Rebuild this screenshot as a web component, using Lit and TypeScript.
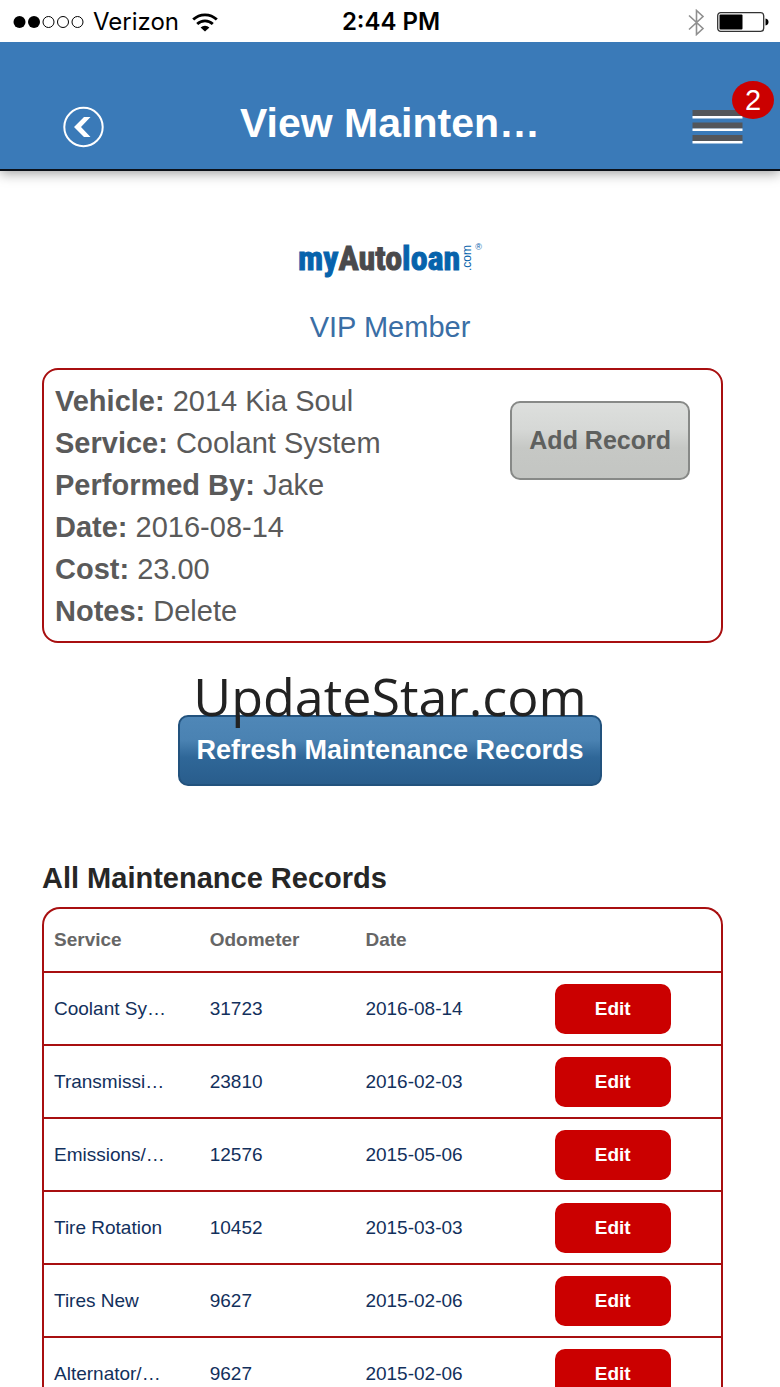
import { LitElement, html, css, svg } from "lit";
import { customElement, property } from "lit/decorators.js";

interface MaintenanceRecord {
  service: string;
  odometer: string;
  date: string;
}

const RECORDS: MaintenanceRecord[] = [
  { service: "Coolant Sy…", odometer: "31723", date: "2016-08-14" },
  { service: "Transmissi…", odometer: "23810", date: "2016-02-03" },
  { service: "Emissions/…", odometer: "12576", date: "2015-05-06" },
  { service: "Tire Rotation", odometer: "10452", date: "2015-03-03" },
  { service: "Tires New", odometer: "9627", date: "2015-02-06" },
  { service: "Alternator/…", odometer: "9627", date: "2015-02-06" },
];

const DETAILS: [string, string][] = [
  ["Vehicle:", "2014 Kia Soul"],
  ["Service:", "Coolant System"],
  ["Performed By:", "Jake"],
  ["Date:", "2016-08-14"],
  ["Cost:", "23.00"],
  ["Notes:", "Delete"],
];

@customElement("status-bar")
export class StatusBar extends LitElement {
  static styles = css`
    :host {
      display: grid;
      grid-template-columns: 1fr auto 1fr;
      align-items: center;
      box-sizing: border-box;
      height: 42px;
      padding: 2px 11px 0 13px;
      position: relative;
      z-index: 2;
      background: #fff;
      color: #000;
      font: 24px/40px Inter, Roboto, sans-serif;
    }
    .left,
    .right {
      display: flex;
      align-items: center;
    }
    .left {
      gap: 9px;
    }
    .wifi {
      margin-left: 4px;
    }
    .right {
      gap: 12px;
      justify-content: flex-end;
    }
    .time {
      font-weight: 600;
    }
    svg {
      display: block;
    }
  `;

  render() {
    return html`
      <div class="left">
        <svg width="71" height="14" viewBox="0 0 71 14" aria-hidden="true">
          <circle cx="6.5" cy="7" r="6" />
          <circle cx="21" cy="7" r="6" />
          ${[35.5, 50, 64.5].map(
            (x) => svg`<circle cx=${x} cy="7" r="5.5" fill="none" stroke="#000" stroke-width="1" />`
          )}
        </svg>
        <span>Verizon</span>
        <svg class="wifi" width="26" height="19" viewBox="0 0 26 19" aria-hidden="true">
          <g fill="none" stroke="#000" stroke-width="2.8">
            <path d="M1.2 6.6a17 17 0 0 1 23.6 0" />
            <path d="M5.2 11a11.2 11.2 0 0 1 15.6 0" />
          </g>
          <path d="M13 18.6 8.6 14.4a6.4 6.4 0 0 1 8.8 0z" />
        </svg>
      </div>
      <span class="time">2:44 PM</span>
      <div class="right">
        <svg width="17" height="27" viewBox="0 0 17 27" aria-hidden="true">
          <path d="M1 6.5 15 19.5 8.5 25.500V1.500L15 7.500 1 20.500" fill="none" stroke="#8f8f8f" stroke-width="1.6" />
        </svg>
        <svg width="52" height="20" viewBox="0 0 52 20" aria-hidden="true">
          <rect x=".7" y=".7" width="46" height="18.6" rx="3" fill="#fff" stroke="#333" stroke-width="1.3" />
          <rect x="2.500" y="2.500" width="23" height="15" rx="1" />
          <path d="M48.500 6.500c2.200.4 3 1.600 3 3.500s-.8 3.100-3 3.500z" />
        </svg>
      </div>
    `;
  }
}

@customElement("title-bar")
export class TitleBar extends LitElement {
  @property() heading = "";
  @property({ type: Number }) count = 0;

  static styles = css`
    :host {
      display: grid;
      grid-template-columns: 1fr auto 1fr;
      align-items: center;
      box-sizing: border-box;
      height: 129px;
      padding: 42px 36px 0;
      position: relative;
      z-index: 1;
      background: #3a7ab8;
      border-bottom: 2px solid #0b1018;
      box-shadow: 0 2px 12px rgba(0, 0, 0, 0.4);
      color: #fff;
    }
    h1 {
      margin: 0;
      padding-bottom: 8px;
      font-size: 41px;
      line-height: 48px;
      font-weight: 700;
      white-space: nowrap;
    }
    button {
      padding: 0;
      border: 0;
      background: none;
      color: inherit;
      font: inherit;
      cursor: pointer;
    }
    .back {
      justify-self: start;
      margin-left: 27px;
    }
    .menu {
      justify-self: end;
      position: relative;
      margin-top: 2px;
    }
    .badge {
      position: absolute;
      left: 40px;
      top: -29px;
      width: 42px;
      height: 38px;
      border-radius: 50%;
      background: #cb0000;
      font-size: 29px;
      line-height: 39px;
      text-align: center;
    }
    svg {
      display: block;
    }
  `;

  render() {
    return html`
      <button class="back" aria-label="Back">
        <svg width="42" height="42" viewBox="0 0 42 42" fill="#fff">
          <circle cx="20.500" cy="21" r="19.200" fill="none" stroke="#fff" stroke-width="2" />
          <path d="M11 21 21 11h6.500L18 21l9.500 10H21z" />
        </svg>
      </button>
      <h1>${this.heading}</h1>
      <button class="menu" aria-label="Menu">
        <svg width="52" height="36" viewBox="0 0 52 36">
          ${[0, 12.5, 25].map(
            (y) => svg`
              <rect x="0.500" y=${y} width="50" height="6" fill="#53565a" />
              <rect x="0.500" y=${y + 6} width="50" height="2.500" fill="#fff" />
            `
          )}
        </svg>
        <span class="badge">${this.count}</span>
      </button>
    `;
  }
}

@customElement("brand-logo")
export class BrandLogo extends LitElement {
  static styles = css`
    :host {
      display: flex;
      justify-content: center;
      align-items: flex-start;
      gap: 3px;
      height: 36px;
      color: #0763ac;
    }
    .name {
      font: 700 34px/36px "Roboto Condensed", "Open Sans Condensed", "Noto Sans Condensed",
        "Noto Sans ExtraCondensed", Roboto, sans-serif;
      -webkit-text-stroke: 1px currentColor;
    }
    .dark {
      color: #4a4a4c;
    }
    .domain {
      margin-top: 5px;
      writing-mode: vertical-rl;
      transform: rotate(180deg);
      font-size: 12px;
      line-height: 9px;
    }
    .mark {
      margin-top: 3px;
      font-size: 9px;
      line-height: 9px;
    }
  `;

  render() {
    return html`
      <span class="name">my<span class="dark">Auto</span>loan</span>
      <span class="domain">.com</span>
      <span class="mark">®</span>
    `;
  }
}

@customElement("app-root")
export class AppRoot extends LitElement {
  static styles = css`
    :host {
      display: flex;
      flex-direction: column;
      height: 100vh;
      position: relative;
      overflow: hidden;
      background: #fff;
      font-family: "Liberation Sans", Arial, sans-serif;
    }
    status-bar,
    title-bar {
      flex: none;
    }
    main {
      flex: 1;
      min-height: 0;
      overflow-y: auto;
      scrollbar-width: none;
      padding: 69px 57px 0 42px;
    }
    brand-logo {
      margin-left: 15px;
    }
    .member {
      margin: 32px 0 0 15px;
      color: #3a6ea5;
      font-size: 29px;
      line-height: 38px;
      text-align: center;
    }
    .card {
      display: flex;
      justify-content: space-between;
      align-items: flex-start;
      margin-top: 22px;
      padding: 10px 31px 9px 11px;
      border: 2px solid #a80f10;
      border-radius: 16px;
    }
    dl {
      margin: 0;
      color: #5a5a5a;
      font-size: 29px;
      line-height: 42px;
    }
    dt,
    dd {
      display: inline;
      margin: 0;
    }
    dt {
      font-weight: 700;
    }
    button {
      font-family: inherit;
      font-weight: 700;
      cursor: pointer;
    }
    .add {
      margin-top: 21px;
      padding: 0 17px;
      height: 79px;
      border: 2px solid #878987;
      border-radius: 10px;
      background: linear-gradient(#dddfdd, #d6d8d6 35%, #c6c8c5 60%, #c3c5c2);
      color: #5e605e;
      font-size: 25px;
    }
    .refresh-row {
      display: flex;
      justify-content: center;
      margin: 72px 0 0 15px;
    }
    .refresh {
      height: 71px;
      padding: 0 16px;
      border: 2px solid #22527d;
      border-radius: 10px;
      background: linear-gradient(#4f87b7, #4a82b2 35%, #2f6798 60%, #295d8c);
      color: #fff;
      font-size: 27px;
    }
    h2 {
      margin: 73px 0 0;
      color: #262626;
      font-size: 29px;
      line-height: 38px;
    }
    table {
      width: 100%;
      margin-top: 10px;
      table-layout: fixed;
      border-collapse: separate;
      border-spacing: 0;
      border: 2px solid #a80f10;
      border-bottom: 0;
      border-radius: 18px 18px 0 0;
      font-size: 19px;
      text-align: left;
    }
    .wide {
      width: 23%;
    }
    .date {
      width: 22%;
    }
    th,
    td {
      box-sizing: border-box;
      padding: 0 0 0 10px;
      white-space: nowrap;
      border-bottom: 2px solid #a80f10;
    }
    th {
      height: 64px;
      color: #666;
    }
    td {
      height: 73px;
      color: #12305c;
    }
    .action {
      padding: 0;
      text-align: center;
    }
    .edit {
      width: 116px;
      height: 50px;
      padding: 0;
      border: 0;
      border-radius: 10px;
      background: #cb0000;
      color: #fff;
      font-size: 19px;
      vertical-align: middle;
    }
    .watermark {
      position: absolute;
      inset: 0;
      z-index: 2;
      display: flex;
      align-items: center;
      justify-content: center;
      padding-top: 4px;
      pointer-events: none;
      color: #222;
      font: 52px/72px "Open Sans", "Noto Sans", sans-serif;
    }
  `;

  render() {
    return html`
      <status-bar></status-bar>
      <title-bar heading="View Mainten…" count="2"></title-bar>
      <main>
        <brand-logo></brand-logo>
        <p class="member">VIP Member</p>
        <section class="card">
          <dl>
            ${DETAILS.map(([label, value]) => html`<div><dt>${label}</dt> <dd>${value}</dd></div>`)}
          </dl>
          <button class="add">Add Record</button>
        </section>
        <div class="refresh-row">
          <button class="refresh">Refresh Maintenance Records</button>
        </div>
        <h2>All Maintenance Records</h2>
        <table>
          <thead>
            <tr>
              <th class="wide">Service</th>
              <th class="wide">Odometer</th>
              <th class="date">Date</th>
              <th class="action"></th>
            </tr>
          </thead>
          <tbody>
            ${RECORDS.map(
              (r) => html`
                <tr>
                  <td>${r.service}</td>
                  <td>${r.odometer}</td>
                  <td>${r.date}</td>
                  <td class="action"><button class="edit">Edit</button></td>
                </tr>
              `
            )}
          </tbody>
        </table>
      </main>
      <div class="watermark">UpdateStar.com</div>
    `;
  }
}
